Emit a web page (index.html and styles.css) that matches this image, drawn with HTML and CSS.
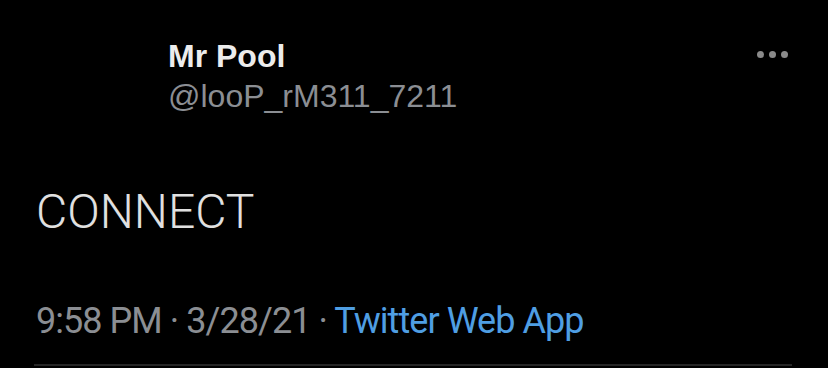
FILE: index.html
```html
<!DOCTYPE html>
<html>
<head>
<meta charset="utf-8">
<link rel="stylesheet" href="styles.css">
</head>
<body>
<div class="tweet">
  <div class="header">
    <div class="avatar-space"></div>
    <div class="names">
      <div class="name">Mr Pool</div>
      <div class="handle">@looP_rM311_7211</div>
    </div>
    <div class="more">
      <span class="dot"></span><span class="dot"></span><span class="dot"></span>
    </div>
  </div>
  <div class="text">CONNECT</div>
  <div class="meta">9:58 PM · 3/28/21 · <span class="source">Twitter Web App</span></div>
  <div class="divider"></div>
</div>
</body>
</html>
```
FILE: styles.css
```css
html, body {
  margin: 0;
  padding: 0;
  background: #000;
  width: 828px;
  height: 368px;
  overflow: hidden;
}
.tweet {
  padding: 36px 36px 0 34px;
  font-family: "Liberation Sans", Arial, sans-serif;
}
.header {
  display: flex;
  align-items: flex-start;
  padding-left: 2px;
}
.avatar-space {
  width: 132px;
  flex: none;
}
.names {
  flex: 1;
}
.name {
  color: #ececec;
  font-weight: bold;
  font-size: 32px;
  line-height: 40px;
}
.handle {
  color: #8b8e93;
  font-size: 32px;
  line-height: 40px;
}
.more {
  display: flex;
  gap: 5px;
  margin-top: 15px;
  margin-right: 4px;
}
.dot {
  width: 7px;
  height: 7px;
  border-radius: 50%;
  background: #8a8a8a;
}
.text {
  margin-top: 68px;
  padding-left: 2px;
  color: #e0e0e0;
  font-family: Roboto, "Liberation Sans", sans-serif;
  font-weight: 300;
  font-size: 48px;
  line-height: 56px;
}
.meta {
  margin-top: 59px;
  padding-left: 2px;
  color: #8b8e93;
  font-family: Roboto, "Liberation Sans", sans-serif;
  font-size: 36px;
  letter-spacing: -0.95px;
  line-height: 44px;
}
.source {
  color: #4f9ee3;
}
.divider {
  margin-top: 21px;
  height: 2px;
  background: #262626;
}
```
